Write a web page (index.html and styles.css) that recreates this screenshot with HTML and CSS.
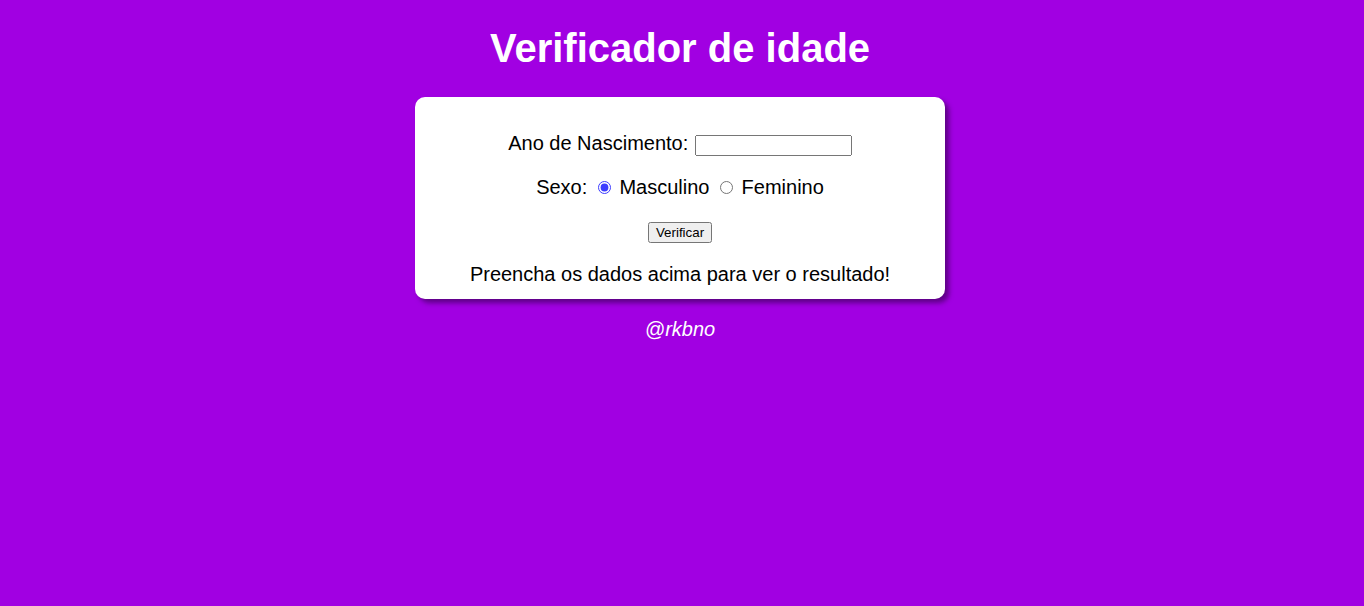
FILE: index.html
```html
<!DOCTYPE html>
<html lang="pt-BR">
<head>
<meta charset="utf-8">
<title>Verificador de idade</title>
<link rel="stylesheet" href="styles.css">
</head>
<body>
<header class="topo">
  <h1 class="titulo">Verificador de idade</h1>
</header>
<section class="cartao">
  <div class="linha">Ano de Nascimento: <input type="number" class="campo-ano"></div>
  <div class="linha">Sexo: <input type="radio" name="sexo" id="masc" class="opcao" checked> <label for="masc">Masculino</label> <input type="radio" name="sexo" id="fem" class="opcao"> <label for="fem">Feminino</label></div>
  <div class="linha linha-botao"><button type="button" class="botao">Verificar</button></div>
  <div class="linha resultado">Preencha os dados acima para ver o resultado!</div>
</section>
<footer class="rodape">
  <p class="assinatura">@rkbno</p>
</footer>
</body>
</html>
```

FILE: styles.css
```css
html, body {
  margin: 0;
  padding: 0;
}

body {
  background-color: #a100e2;
  font-family: Arial, "Liberation Sans", sans-serif;
  font-size: 20px;
  padding-right: 4px;
  min-height: 606px;
  box-sizing: border-box;
}

.topo {
  text-align: center;
  color: #ffffff;
}

.titulo {
  font-size: 40px;
  font-weight: bold;
  margin: 0;
  padding: 26px 0 26px;
}

.cartao {
  background: #ffffff;
  width: 530px;
  margin: 0 auto;
  border-radius: 10px;
  box-shadow: 4px 4px 5px rgba(40, 0, 60, 0.55);
  padding: 35px 20px 13px;
  box-sizing: border-box;
  display: flex;
  flex-direction: column;
  gap: 20px;
  text-align: center;
  color: #000000;
}

.linha {
  line-height: 23px;
}

.campo-ano {
  width: 157px;
  height: 21px;
  box-sizing: border-box;
  font-size: 13.33px;
  vertical-align: baseline;
  margin-left: 1px;
  -moz-appearance: textfield;
}

.campo-ano::-webkit-outer-spin-button,
.campo-ano::-webkit-inner-spin-button {
  -webkit-appearance: none;
  margin: 0;
}

.opcao {
  accent-color: #3c3cff;
}

.linha-botao {
  line-height: 23px;
}

.botao {
  font-size: 13.33px;
  font-family: Arial, "Liberation Sans", sans-serif;
}

.rodape {
  text-align: center;
}

.assinatura {
  color: #ffffff;
  font-style: italic;
  margin: 19px 0;
  line-height: 23px;
}
```
